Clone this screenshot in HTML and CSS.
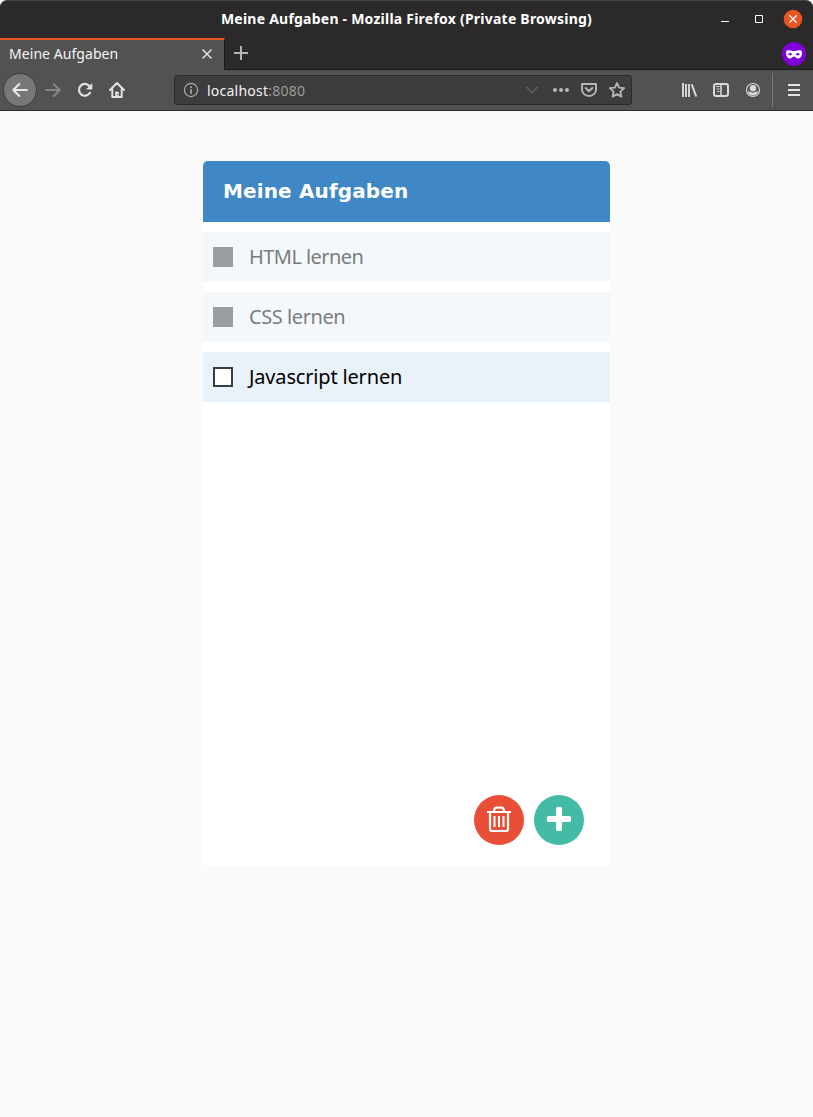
FILE: index.html
```html
<!DOCTYPE html>
<html lang="de">
<head>
<meta charset="utf-8">
<title>Meine Aufgaben</title>
<link rel="stylesheet" href="styles.css">
</head>
<body>
<div class="window">
  <header class="titlebar">
    <span class="titlebar-text">Meine Aufgaben - Mozilla Firefox (Private Browsing)</span>
    <svg class="window-controls" width="90" height="38" viewBox="0 0 90 38" fill="none" stroke="#fff">
      <path d="M8 21.500h8"/><path d="M42.500 15.500h7v7h-7z"/>
      <circle cx="80" cy="19" r="9.300" fill="#e95420" stroke="none"/>
      <path d="M76.300 15.300l7.400 7.400m0-7.400l-7.400 7.400" stroke-width="1.300"/>
    </svg>
  </header>
  <div class="tabstrip">
    <div class="tab">
      <span class="tab-text">Meine Aufgaben</span>
      <svg class="tab-close" width="12" height="12" viewBox="0 0 12 12" fill="none" stroke="#d8d8d8" stroke-width="1.700"><path d="M1.500 1.500l9 9m0-9l-9 9"/></svg>
    </div>
    <svg class="new-tab" width="14" height="14" viewBox="0 0 14 14" fill="none" stroke="#b5b5b5" stroke-width="2"><path d="M7 0v14M0 7h14"/></svg>
    <svg class="private" width="24" height="24" viewBox="0 0 24 24">
      <circle cx="12" cy="12" r="12" fill="#8000d7"/>
      <path fill="#fff" fill-rule="evenodd" d="M4 10.500C4 8.500 5.500 8.300 7 8.300c2 0 3.500 1 5 1s3-1 5-1c1.500 0 3 .2 3 2.200 0 3.500-1.500 6-4 6-2 0-2.500-2-4-2s-2 2-4 2c-2.500 0-4-2.500-4-6zM6 12.300q2.300 2.200 4.300 0-2.100-2.400-4.300 0zm7.700 0q2 2.200 4.300 0-2.200-2.400-4.300 0z"/>
    </svg>
  </div>
  <nav class="toolbar">
    <div class="back"><svg width="16" height="16" viewBox="0 0 16 16" fill="none" stroke="#e8e8e8" stroke-width="2" stroke-linecap="round" stroke-linejoin="round"><path d="M15 8H1.300M7.300 2l-6 6 6 6"/></svg></div>
    <svg class="forward" width="16" height="16" viewBox="0 0 16 16" fill="none" stroke="#858585" stroke-width="2" stroke-linecap="round" stroke-linejoin="round"><path d="M1 8h13.700M8.700 2l6 6-6 6"/></svg>
    <svg class="reload" width="16" height="16" viewBox="0 0 16 16" fill="none" stroke="#e2e2e2" stroke-width="2.200" stroke-linecap="round"><path d="M13 10.800A5.900 5.900 0 1 1 12.400 4"/><path d="M15.300 1v6.500H9z" fill="#e2e2e2" stroke="none"/></svg>
    <svg class="home" width="16" height="16" viewBox="0 0 16 16" fill="none" stroke="#e2e2e2" stroke-width="2" stroke-linecap="round" stroke-linejoin="round"><path d="M1 8l7-7 7 7M3.300 7v8h9.400V7"/><path d="M6.800 14.500V10h2.400v4.500z" fill="#e2e2e2" stroke-width="1"/><path d="M8 12.500h1" stroke="#525252" stroke-width="1" stroke-linecap="butt"/></svg>
    <div class="urlbar">
      <svg class="info" width="16" height="16" viewBox="0 0 16 16" fill="none" stroke="#aaa"><circle cx="8" cy="8" r="6.600" stroke-width="1.200"/><path d="M8 7v5M8 4.200v1.700" stroke-width="1.600"/></svg>
      <span class="url">localhost<span class="port">:8080</span></span>
      <svg class="url-actions" width="102" height="18" viewBox="0 0 102 18" fill="none" stroke="#b8b8b8" stroke-width="2" stroke-linecap="round" stroke-linejoin="round">
        <path d="M3 6.500l5 5 5-5" stroke="#5f5f5f" stroke-width="1.700"/>
        <g fill="#b8b8b8" stroke="none"><circle cx="31" cy="9" r="2"/><circle cx="37" cy="9" r="2"/><circle cx="43" cy="9" r="2"/></g>
        <path d="M58 3h14v5.500a7 6.500 0 0 1-14 0z" stroke-width="1.900"/><path d="M61.700 7l3.300 3.200L68.300 7"/>
        <path d="M93 2l2.100 4.600 5 .6-3.700 3.400 1 5L93 13.100l-4.400 2.500 1-5-3.700-3.400 5-.6z" stroke-width="1.800"/>
      </svg>
    </div>
    <svg class="tools" width="80" height="16" viewBox="0 0 80 16" fill="none" stroke="#dadada">
      <path d="M2 1v14M5 2v13M8 2v13" stroke-width="1.900"/><path d="M10.700 2.300L15.200 14.500" stroke-width="2"/>
      <rect x="33" y="2" width="14" height="12" rx="2" stroke-width="2"/><path d="M40 2v12" stroke-width="1.600"/><path d="M35 4.500h3.500M35.500 7h3M36 9.500h2.500"/>
      <circle cx="72" cy="8" r="6.500" stroke-width="1.200"/><circle cx="72" cy="6.200" r="3.200" fill="#dadada" stroke="none"/><path d="M66.900 9.200c1.300.2 2.500.4 3.500 1.100q1.600.8 3.200 0c1-.7 2.200-.9 3.500-1.100-.6 2.700-2.500 4.300-5.100 4.300s-4.500-1.600-5.100-4.300z" fill="#dadada" stroke="none"/>
    </svg>
    <span class="divider"></span>
    <svg width="12" height="14" viewBox="0 0 12 14" stroke="#e2e2e2" stroke-width="2" class="menu"><path d="M0 2h12M0 7h12M0 12h12"/></svg>
  </nav>
  <main class="page">
    <section class="card">
      <h1 class="card-title">Meine Aufgaben</h1>
      <ul class="tasks">
        <li class="task done"><span class="box"></span><span class="label label-html">HTML lernen</span></li>
        <li class="task done"><span class="box"></span><span class="label label-css">CSS lernen</span></li>
        <li class="task"><span class="box"></span><span class="label label-js">Javascript lernen</span></li>
      </ul>
      <div class="actions">
        <button class="action delete" aria-label="Löschen"><svg width="26" height="28" viewBox="0 0 26 28" fill="none" stroke="#fff" stroke-width="2.200"><path d="M1 6h24M7.700 5.500l.8-2.500q.5-1.300 1.700-1.300h5.600q1.200 0 1.700 1.300l.8 2.500M4 6v17q0 2 2 2h14q2 0 2-2V6"/><path d="M8.500 10v11M13 10v11M17.500 10v11" stroke-width="2"/></svg></button>
        <button class="action add" aria-label="Hinzufügen"><svg width="24" height="24" viewBox="0 0 24 24" fill="#fff"><path d="M10.500 0h3q1.500 0 1.500 1.500V9h7.500Q24 9 24 10.500v3q0 1.500-1.500 1.500H15v7.500q0 1.500-1.500 1.500h-3Q9 24 9 22.500V15H1.500Q0 15 0 13.500v-3Q0 9 1.500 9H9V1.500Q9 0 10.500 0z"/></svg></button>
      </div>
    </section>
  </main>
</div>
</body>
</html>
```
FILE: styles.css
```css
* { box-sizing: border-box; }
body { margin: 0; background: #fafafa; font-family: "Noto Sans", sans-serif; }
.window { height: 1117px; display: flex; flex-direction: column; overflow: hidden; }
.titlebar { height: 38px; display: flex; align-items: center; justify-content: center; background: #2c292a; border-top: 1px solid #474445; border-radius: 7px 7px 0 0; color: #fff; font-size: 14px; font-weight: 700; padding: 0 10px 2px 100px; flex: none; }
.titlebar-text { flex: 1; text-align: center; white-space: nowrap; letter-spacing: .23px; }
.window-controls { flex: none; }
.tabstrip { height: 32px; flex: none; display: flex; align-items: center; background: #2c292a; border-bottom: 1px solid #1b191a; }
.tab { width: 225px; height: 32px; align-self: flex-start; flex: none; margin-bottom: -1px; display: flex; align-items: center; justify-content: space-between; padding: 0 11px 0 9px; background: #525252; border-top: 2px solid #e95420; border-right: 1px solid #1b191a; color: #f4f4f4; font-size: 14px; letter-spacing: .06px; }
.tab-text { padding-bottom: 3px; }
.tab-close { margin-bottom: 2px; }
.new-tab { margin: 0 0 2px 9px; }
.private { margin-left: auto; margin-right: 7px; }
.toolbar { height: 41px; flex: none; display: flex; align-items: center; background: #525252; border-bottom: 1px solid #2b2b2b; }
.back { width: 34px; height: 34px; margin-left: 3px; border: 1px solid #3d3d3d; border-radius: 50%; background: #777; display: flex; align-items: center; justify-content: center; }
.forward { margin-left: 8px; }
.reload, .home { margin-left: 16px; }
.urlbar { width: 458px; height: 30px; margin-left: 49px; display: flex; align-items: center; background: #3d3d3d; border: 1px solid #2a2a2a; border-radius: 3px; padding: 0 5px 0 8px; }
.url { margin-left: 8px; color: #f2f2f2; font-size: 14px; letter-spacing: .23px; }
.port { color: #9c9c9c; }
.url-actions { margin-left: auto; }
.tools { margin-left: 49px; }
.divider { width: 1px; height: 34px; margin-left: 11px; background: #777; }
.menu { margin-left: 15px; }
.page { flex: 1; padding-top: 50px; background: #fafafa; }
.card { width: 407px; height: 705px; margin: 0 auto; display: flex; flex-direction: column; background: #fff; border-radius: 5px; overflow: hidden; }
.card-title { margin: 0; height: 61px; padding-left: 20px; background: #4087c6; color: #fff; font: 700 20px/60px "DejaVu Sans", sans-serif; letter-spacing: .14px; }
.tasks { list-style: none; margin: 10px 0 0; padding: 0; display: flex; flex-direction: column; gap: 10px; }
.task { height: 50px; padding-left: 10px; display: flex; align-items: center; gap: 16px; background: #eaf2f9; color: #000; font-size: 20px; }
.label { padding-bottom: 2px; }
.label-html { letter-spacing: -.55px; }
.label-css { letter-spacing: -.42px; }
.label-js { letter-spacing: -.17px; }
.box { width: 20px; height: 20px; border: 2px solid #393e42; background: #fff; }
.done { background: #f4f8fb; color: #7b7c7e; }
.done .box { background: #9b9e9f; border-color: #9b9e9f; }
.actions { margin-top: auto; padding: 0 26px 21px 0; display: flex; justify-content: flex-end; gap: 10px; }
.action { width: 50px; height: 50px; padding: 0; border: 0; border-radius: 50%; display: flex; align-items: center; justify-content: center; }
.delete { background: #e94f37; }
.add { background: #44bba4; }
.add svg { margin-bottom: 3px; }
```
